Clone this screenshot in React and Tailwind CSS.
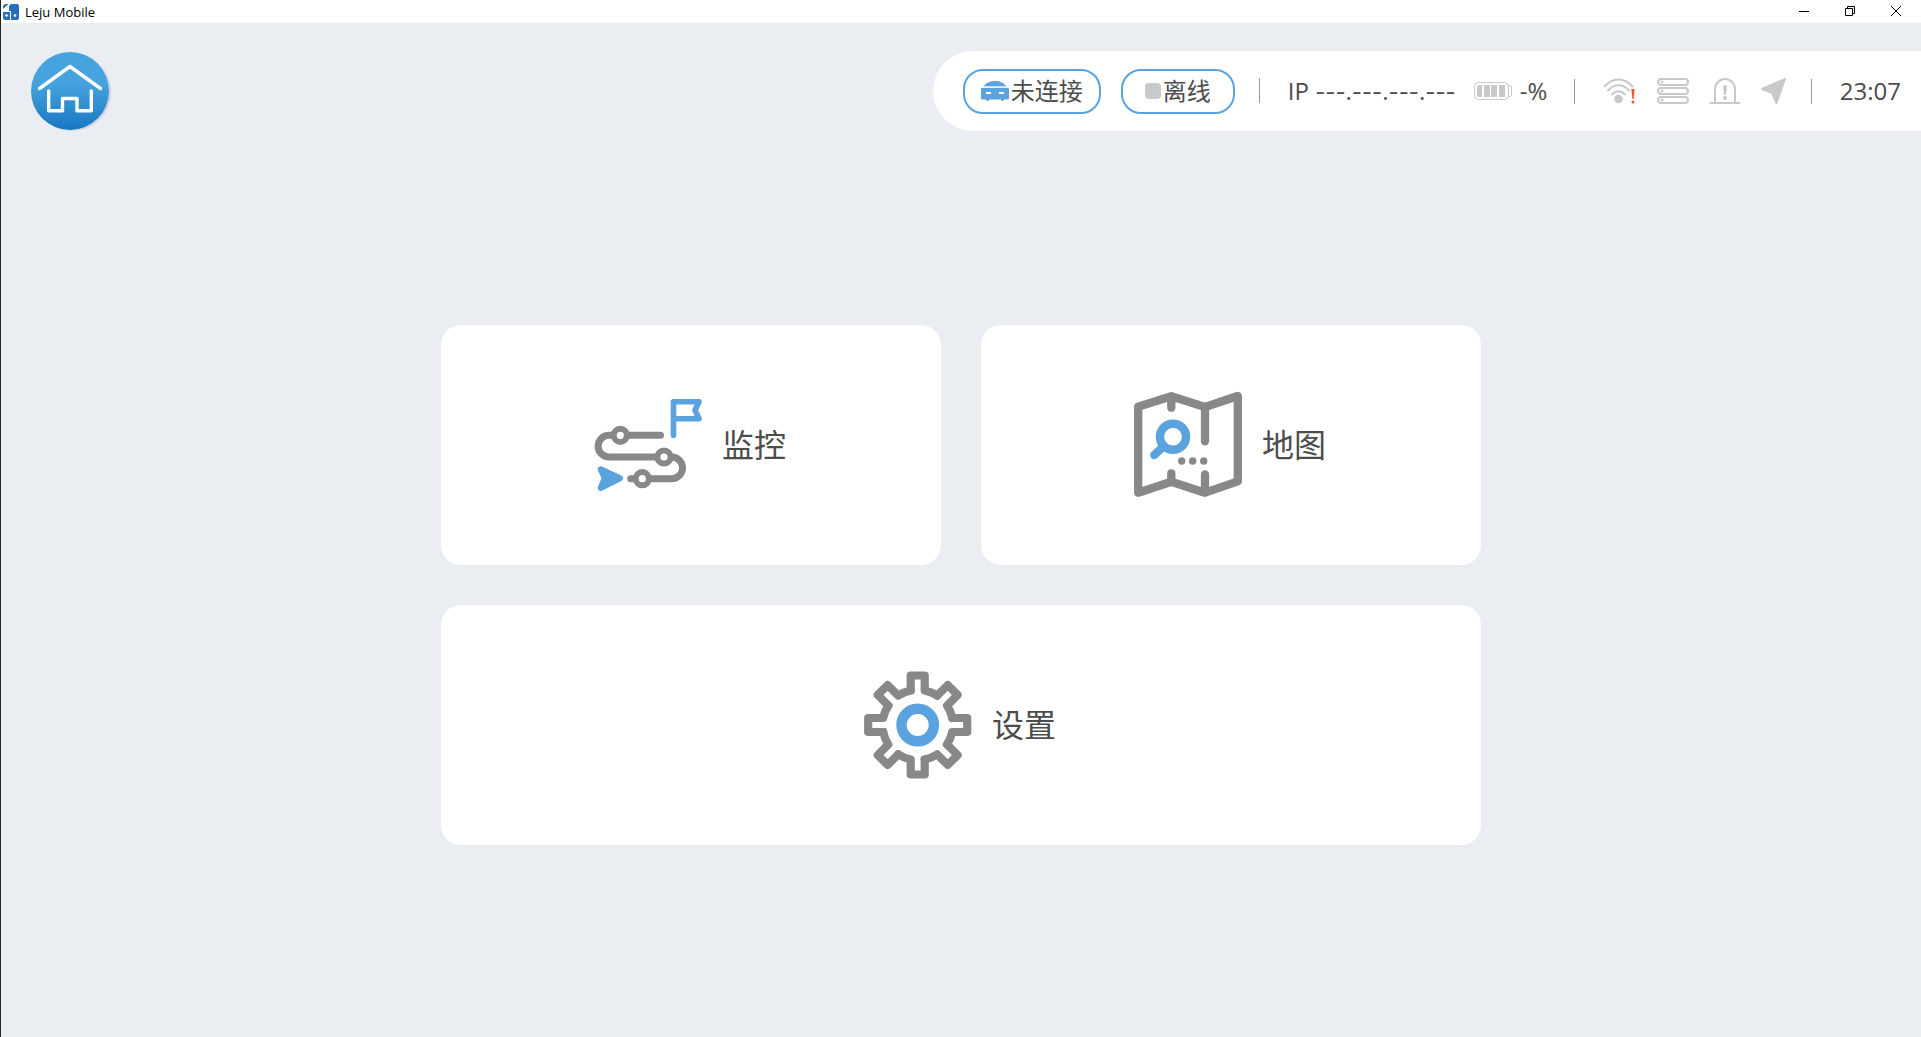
import React from "react";

const GEAR_ANGLES = [0, 45, 90, 135, 180, 225, 270, 315];

const AppLogo = () => (
  <svg width="16" height="16" viewBox="0 0 16 16">
    <path d="M8 0h6a2 2 0 0 1 2 2v12a2 2 0 0 1-2 2H8V7H6V2z" fill="#2a6ebb" />
    <path d="M0 3a3 3 0 0 1 3-3h2.500L0 5z" fill="#2a6ebb" />
    <path d="M0 8h7v8H2a2 2 0 0 1-2-2z" fill="#2a6ebb" />
    <circle cx="3.500" cy="11.500" r="1.300" fill="#fff" />
    <circle cx="12" cy="11.500" r="1.300" fill="#fff" />
  </svg>
);

const HomeIcon = () => (
  <svg width="78" height="78" viewBox="0 0 78 78" fill="none" stroke="#fff" strokeWidth="3.4" strokeLinecap="round" strokeLinejoin="round">
    <path d="M8.5 36.5 39 14.5 69.5 36.5" />
    <path d="M17.7 39v19.7h13.8V46.5H46v12.2h14.3V39" />
  </svg>
);

const RobotIcon = () => (
  <svg width="28" height="20" viewBox="0 0 28 20">
    <path d="M3 5C5 2 9 0 14 0s9 2 11 5z" fill="#5aa3de" />
    <path d="M1 7h26a1 1 0 0 1 1 1v9a1.500 1.500 0 0 1-1.500 1.500H23a1.500 1.500 0 0 1-3 0H8a1.500 1.500 0 0 1-3 0H1.500A1.500 1.500 0 0 1 0 17V8a1 1 0 0 1 1-1z" fill="#5aa3de" />
    <path d="M2 5h24v1.500H2z" fill="#c9e0f4" />
    <path d="M5 11h5v2H5zM18 11h5v2h-5z" fill="#fff" />
  </svg>
);

const BatteryIcon = () => (
  <svg width="38" height="18" viewBox="0 0 38 18">
    <rect x="0.500" y="0.500" width="34" height="17" rx="4" fill="none" stroke="#c8c9cb" />
    <path d="M35 3.500h1a1.500 1.500 0 0 1 1.500 1.500v8a1.500 1.500 0 0 1-1.500 1.500h-1" fill="none" stroke="#c8c9cb" />
    <path d="M3 5a2 2 0 0 1 2-2h3v12H5a2 2 0 0 1-2-2zM10 3h6v12h-6zM17 3h6v12h-6zM25 3h6v12h-6z" fill="#c8c9cb" />
  </svg>
);

const WifiIcon = () => (
  <svg width="34" height="26" viewBox="0 0 34 26" fill="none" stroke="#c8c9cb" strokeWidth="2" strokeLinecap="round">
    <path d="M1.500 8.500C10-1 21-1 29.500 8.500M5 12.500c6-7 15-7 21 0M9 16.500c4-4.500 9-4.500 13 0" />
    <circle cx="15.500" cy="21" r="4.300" fill="#c8c9cb" stroke="none" />
    <path d="M28.300 11h3.400l-1.100 10h-1.200z" fill="#f2582c" stroke="none" />
    <circle cx="30" cy="24" r="1.500" fill="#f2582c" stroke="none" />
  </svg>
);

const ServerIcon = () => (
  <svg width="32" height="26" viewBox="0 0 32 26" fill="none" stroke="#c8c9cb" strokeWidth="2">
    {[1, 10, 19].map((y) => (
      <g key={y}>
        <rect x="1" y={y} width="30" height="6" rx="3" />
        <circle cx="5" cy={y + 3} r="1.500" fill="#c8c9cb" stroke="none" />
      </g>
    ))}
  </svg>
);

const AlarmIcon = () => (
  <svg width="32" height="26" viewBox="0 0 32 26" fill="none" stroke="#c8c9cb" strokeWidth="2" strokeLinecap="round">
    <path d="M1.500 25h29M6 24.500V11a10 10 0 0 1 20 0v13.500" />
    <path d="M14 7.500h4l-1 9.500h-2z" fill="#c8c9cb" stroke="none" />
    <circle cx="16" cy="20" r="2" fill="#c8c9cb" stroke="none" />
  </svg>
);

const LocationIcon = () => (
  <svg width="26" height="26" viewBox="0 0 26 26">
    <path d="M1 11 24 1 15.500 25 11 15z" fill="#c8c9cb" stroke="#c8c9cb" strokeWidth="2" strokeLinejoin="round" />
  </svg>
);

const RouteIcon = () => (
  <svg width="108" height="108" viewBox="0 0 108 108" fill="none" strokeLinecap="round" strokeLinejoin="round">
    <path d="M66.500 44.300H15a10.850 10.850 0 0 0 0 21.700h62.700a10.850 10.850 0 0 1 0 21.700H36.700" stroke="#888" strokeWidth="7" />
    <g fill="#fff" stroke="#888" strokeWidth="6">
      <circle cx="26.300" cy="44.300" r="6.600" />
      <circle cx="70" cy="66" r="6.600" />
      <circle cx="48.300" cy="87.700" r="6.600" />
    </g>
    <path d="M79.500 44.300V10.700H105l-4 8.500 4 8.500H79.500" stroke="#5aa3de" strokeWidth="5.600" />
    <path d="M6.700 78.300 26 87.300 6.700 97l4-9.700z" fill="#5aa3de" stroke="#5aa3de" strokeWidth="6" />
  </svg>
);

const MapIcon = () => (
  <svg width="108" height="108" viewBox="0 0 108 108" fill="none" strokeLinecap="round" strokeLinejoin="round">
    <path
      d="M4.200 15.700 37.300 5.200 71 16 103.800 5v85.300L71 101.700 37.300 90.700 4.200 101.700zM37.300 5.200v11.500M71 16v34.300M37.300 90.700V82.300M71 101.700V83.500"
      stroke="#888"
      strokeWidth="8.300"
    />
    <circle cx="39" cy="45.700" r="13.100" stroke="#5aa3de" strokeWidth="8.400" />
    <path d="M20.300 64 29 55.700" stroke="#5aa3de" strokeWidth="8.400" />
    <g fill="#888">
      <circle cx="47.700" cy="70" r="3.700" />
      <circle cx="58.700" cy="70" r="3.700" />
      <circle cx="69.700" cy="70" r="3.700" />
    </g>
  </svg>
);

const GearIcon = () => (
  <svg width="108" height="108" viewBox="0 0 108 108" fill="none" strokeLinecap="round" strokeLinejoin="round">
    <g transform="translate(53.700 54)">
      {GEAR_ANGLES.map((angle) => (
        <path
          key={angle}
          d="M-7-34.500v-15H7v15A35.200 35.200 0 0 1 19.450-29.350"
          transform={`rotate(${angle})`}
          stroke="#888"
          strokeWidth="8.200"
        />
      ))}
      <circle r="16.200" stroke="#5aa3de" strokeWidth="10.400" />
    </g>
  </svg>
);

const Divider = () => <span className="h-[25px] w-px bg-[#999]" />;

const MenuCard = ({ icon, label, className = "" }) => (
  <button
    type="button"
    className={`flex h-60 items-center justify-center gap-5 rounded-[20px] bg-white pr-0.5 text-[32px] leading-10 ${className}`}
  >
    {icon}
    <span>{label}</span>
  </button>
);

const TitleBar = () => (
  <div className="flex h-[23px] items-center bg-white pl-0.5 text-black">
    <AppLogo />
    <h1 className="ml-1.5 text-[13px] leading-4">Leju Mobile</h1>
    <div className="ml-auto flex h-full pb-0.5 pr-0.5">
      <button type="button" aria-label="最小化" className="grid w-[46px] place-items-center">
        <svg width="10" height="10" viewBox="0 0 10 10" stroke="#000">
          <path d="M0 5.500h10" />
        </svg>
      </button>
      <button type="button" aria-label="还原" className="grid w-[46px] place-items-center">
        <svg width="10" height="10" viewBox="0 0 10 10" fill="none" stroke="#000">
          <path d="M0.500 2.500h7v7h-7zM2.500 2V0.500h7v7H8" />
        </svg>
      </button>
      <button type="button" aria-label="关闭" className="grid w-[46px] place-items-center">
        <svg width="10" height="10" viewBox="0 0 10 10" stroke="#000">
          <path d="M0 0 10 10M10 0 0 10" />
        </svg>
      </button>
    </div>
  </div>
);

const StatusBar = () => (
  <div className="flex h-20 items-center rounded-l-full bg-white pl-[30px] pr-5 text-2xl">
    <button type="button" className="flex h-[45px] w-[138px] items-center justify-center gap-0.5 rounded-[20px] border-2 border-[#5aa3de]">
      <RobotIcon />
      未连接
    </button>
    <button type="button" className="ml-5 flex h-[45px] w-[114px] items-center justify-center gap-0.5 rounded-[20px] border-2 border-[#5aa3de]">
      <span className="size-4 rounded-sm bg-[#c8c9cb]" />
      离线
    </button>
    <div className="ml-6 flex items-center">
      <Divider />
      <span className="ml-7 w-[166px] whitespace-nowrap">
        IP <span className="font-[Inter] text-[22px]">---.---.---.---</span>
      </span>
    </div>
    <div className="ml-5 flex items-center gap-2">
      <BatteryIcon />
      <span className="w-[30px] whitespace-nowrap">-%</span>
    </div>
    <div className="ml-6 flex items-center">
      <Divider />
      <div className="ml-7 flex items-center gap-5">
        <WifiIcon />
        <ServerIcon />
        <AlarmIcon />
        <LocationIcon />
      </div>
    </div>
    <div className="ml-6 flex items-center gap-7">
      <Divider />
      <time>23:07</time>
    </div>
  </div>
);

const App = () => {
  return (
    <div className="flex min-h-screen flex-col border-l border-[#222] bg-[#eaedf2] font-['Open_Sans','Noto_Sans_CJK_SC',sans-serif] text-[#4c4c4c]">
      <TitleBar />
      <header className="mt-7 flex items-center justify-between pl-[30px]">
        <button
          type="button"
          aria-label="首页"
          className="rounded-full bg-linear-to-b from-[#45a3dd] from-40% to-[#1678c2] shadow-[2px_1px_1px_#cfd0dc]"
        >
          <HomeIcon />
        </button>
        <StatusBar />
      </header>
      <main className="flex flex-1 items-center justify-center pt-0.5">
        <div className="grid w-full max-w-[1040px] grid-cols-2 gap-10">
          <MenuCard icon={<RouteIcon />} label="监控" />
          <MenuCard icon={<MapIcon />} label="地图" />
          <MenuCard icon={<GearIcon />} label="设置" className="col-span-2" />
        </div>
      </main>
    </div>
  );
};

export default App;
